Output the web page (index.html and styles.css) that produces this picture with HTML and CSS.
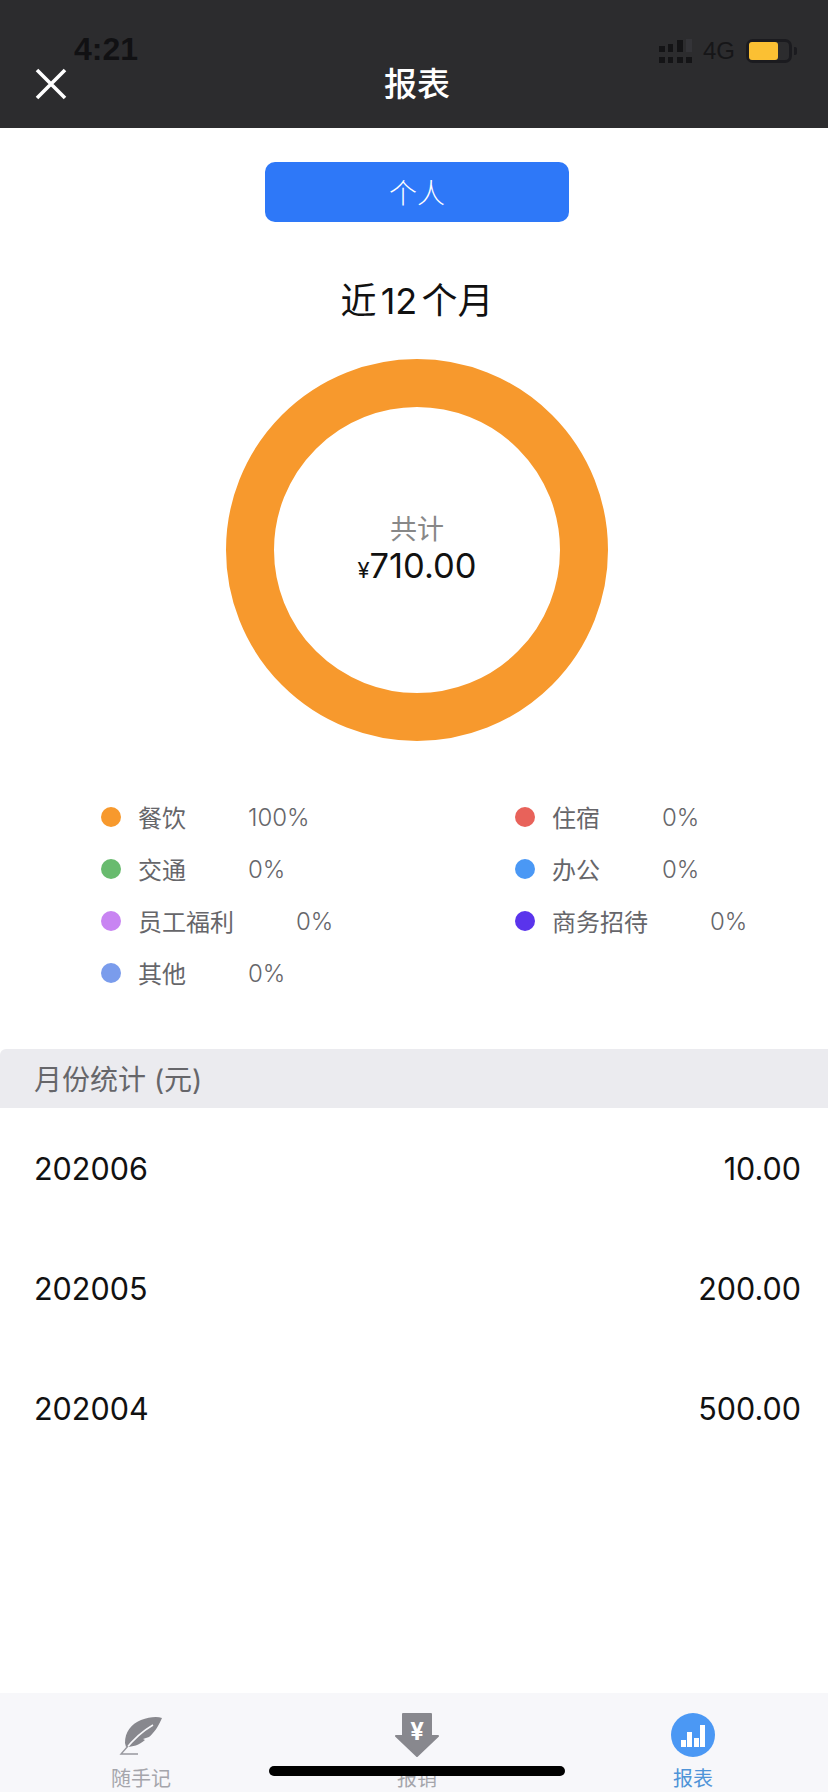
FILE: index.html
```html
<!DOCTYPE html>
<html lang="zh-CN">
<head>
    <meta charset="UTF-8">
    <meta name="viewport" content="width=device-width, initial-scale=1.0">
    <title>报表</title>
    <link rel="stylesheet" href="styles.css">
</head>
<body>
    <div class="app">
        <header class="topbar">
            <button class="close" aria-label="关闭">
                <svg width="32" height="32" viewBox="0 0 32 32"><path d="M2 2L30 30M30 2L2 30" stroke="#fff" stroke-width="3.6" fill="none"/></svg>
            </button>
            <h1>报表</h1>
        </header>

        <!-- phone status bar sits on top of the dark header -->
        <div class="statusbar">
            <span class="clock">4:21</span>
            <div class="status-right">
                <svg width="34" height="24" viewBox="0 0 34 24" fill="#141416">
                    <rect x="1" y="7" width="6" height="6"/>
                    <rect x="10" y="5" width="5" height="8"/>
                    <rect x="19" y="1" width="6" height="12"/>
                    <rect x="28" y="0" width="6" height="13" fill="#343438"/>
                    <rect x="1" y="18" width="6" height="6"/>
                    <rect x="10" y="18" width="5" height="6"/>
                    <rect x="19" y="18" width="6" height="6"/>
                    <rect x="28" y="18" width="6" height="6"/>
                </svg>
                <span class="network">4G</span>
                <div class="battery"><div class="battery-fill"></div></div>
            </div>
        </div>

        <main class="content">
            <div class="summary">
                <button class="scope-btn">个人</button>
                <h2 class="period">近 12 个月</h2>

                <div class="donut">
                    <span class="donut-label">共计</span>
                    <span class="donut-total"><small>¥</small>710.00</span>
                </div>
            </div>

            <ul class="legend">
                <li><i class="dot c-food"></i><span>餐饮</span><em>100%</em></li>
                <li><i class="dot c-hotel"></i><span>住宿</span><em>0%</em></li>
                <li><i class="dot c-traffic"></i><span>交通</span><em>0%</em></li>
                <li><i class="dot c-office"></i><span>办公</span><em>0%</em></li>
                <li><i class="dot c-staff"></i><span>员工福利</span><em>0%</em></li>
                <li><i class="dot c-biz"></i><span>商务招待</span><em>0%</em></li>
                <li><i class="dot c-other"></i><span>其他</span><em>0%</em></li>
            </ul>

            <div class="section-head">月份统计 (元)</div>

            <div class="month-row"><span>202006</span><span>10.00</span></div>
            <div class="month-row"><span>202005</span><span>200.00</span></div>
            <div class="month-row"><span>202004</span><span>500.00</span></div>
        </main>

        <nav class="tabbar">
            <a class="tab">
                <svg width="44" height="44" viewBox="0 0 44 44">
                    <path d="M43 5C38 3 30 4 22 7C12 11 6 19 6 30L7 34C14 34 20 32 26 27L24 26L30 24C35 20 39 14 43 5Z" fill="#88888e"/>
                    <path d="M6 37C13 28 22 19 34 12" stroke="#f7f7fa" stroke-width="1.6" fill="none"/>
                    <path d="M9 33L2 41H19" stroke="#98989e" stroke-width="1.4" fill="none"/>
                </svg>
                <span>随手记</span>
            </a>
            <a class="tab">
                <svg width="44" height="44" viewBox="0 0 44 44">
                    <path d="M8 1H36V23H43L22 43L1 23H8Z" fill="#88888e" stroke="#88888e" stroke-width="2" stroke-linejoin="round"/>
                    <text x="22" y="27" class="yen">¥</text>
                </svg>
                <span>报销</span>
            </a>
            <a class="tab active">
                <svg width="44" height="44" viewBox="0 0 44 44">
                    <circle cx="22" cy="22" r="22" fill="#4b98f4"/>
                    <rect x="10" y="27" width="5" height="7" fill="#fff"/>
                    <rect x="16" y="19" width="5" height="15" fill="#fff"/>
                    <rect x="23" y="25" width="5" height="9" fill="#fff"/>
                    <rect x="29" y="12" width="5" height="22" fill="#fff"/>
                </svg>
                <span>报表</span>
            </a>
        </nav>

        <div class="home-bar"></div>
    </div>
</body>
</html>
```

FILE: styles.css
```css
* {
    margin: 0;
    padding: 0;
    box-sizing: border-box;
}

body {
    font-family: Inter, "Noto Sans CJK SC", sans-serif;
    background: #fff;
}

.app {
    position: relative;
    width: 828px;
    height: 1792px;
    display: flex;
    flex-direction: column;
    overflow: hidden;
}

/* header */
.topbar {
    height: 128px;
    padding: 40px 0 0 6px;
    background: #2c2c2e;
    display: flex;
    align-items: center;
    justify-content: center;
    position: relative;
}

.topbar h1 {
    color: #fff;
    font-size: 33px;
    font-weight: 500;
    line-height: 86px;
}

.close {
    position: absolute;
    left: 35px;
    top: 68px;
    width: 32px;
    height: 32px;
    background: none;
    border: none;
}

.close svg {
    display: block;
}

.statusbar {
    position: absolute;
    left: 0;
    top: 0;
    width: 100%;
    padding: 32px 36px 0 74px;
    height: 66px;
    display: flex;
    justify-content: space-between;
    align-items: center;
    color: #111113;
}

.clock {
    font-family: "Liberation Sans", sans-serif;
    font-size: 32px;
    font-weight: 700;
}

.status-right {
    display: flex;
    align-items: center;
    margin-top: 4px;
}

.network {
    font-family: "Liberation Sans", sans-serif;
    font-size: 24px;
    margin: 0 11px;
    color: #161618;
}

.battery {
    width: 46px;
    height: 24px;
    border: 3px solid #1b1b1f;
    border-radius: 7px;
    position: relative;
}

.battery::after {
    content: "";
    position: absolute;
    right: -8px;
    top: 5px;
    width: 3px;
    height: 8px;
    background: #1b1b1f;
    border-radius: 0 2px 2px 0;
}

.battery-fill {
    width: 29px;
    height: 18px;
    background: #fbc033;
    border-radius: 3px;
}

/* content */
.content {
    flex: 1;
    display: flex;
    flex-direction: column;
}

.summary {
    padding-left: 6px;
    display: flex;
    flex-direction: column;
    align-items: center;
}

.scope-btn {
    margin-top: 34px;
    width: 304px;
    height: 60px;
    background: #2e78f8;
    border: none;
    border-radius: 10px;
    color: #fff;
    font-family: inherit;
    font-size: 28px;
    font-weight: 300;
}

.period {
    margin-top: 54px;
    font-size: 36px;
    font-weight: 400;
    line-height: 50px;
    color: #111;
    word-spacing: -6px;
}

.donut {
    margin-top: 33px;
    width: 382px;
    height: 382px;
    border: 48px solid #f7992d;
    border-radius: 50%;
    display: flex;
    flex-direction: column;
    align-items: center;
    justify-content: center;
}

.donut-label {
    font-size: 27px;
    line-height: 36px;
    color: #888;
}

.donut-total {
    font-size: 34.5px;
    line-height: 36px;
    color: #111;
}

.donut-total small {
    font-size: 22px;
}

.legend {
    list-style: none;
    width: 100%;
    margin-top: 50px;
    padding-left: 101px;
    display: grid;
    grid-template-columns: 414px 1fr;
    grid-auto-rows: 52px;
}

.legend li {
    display: flex;
    align-items: center;
    font-size: 24px;
    color: #66666a;
}

.legend span {
    margin-bottom: 2px;
}

.legend em {
    font-style: normal;
    margin-left: 62px;
    font-weight: 300;
}

.dot {
    width: 20px;
    height: 20px;
    border-radius: 50%;
    margin-right: 17px;
}

.c-food { background: #f7992d; }
.c-hotel { background: #e8625a; }
.c-traffic { background: #68bb6e; }
.c-office { background: #4a98f5; }
.c-staff { background: #c884f2; }
.c-biz { background: #5a34ec; }
.c-other { background: #7a9cec; }

.section-head {
    margin-top: 50px;
    width: 100%;
    height: 59px;
    padding-left: 34px;
    background: #ebebef;
    font-size: 28px;
    line-height: 62px;
    color: #66666a;
    border-radius: 6px 0 0 0;
}

.month-row {
    width: 100%;
    height: 120px;
    padding: 0 27px 0 34px;
    display: flex;
    justify-content: space-between;
    align-items: center;
    font-size: 30.5px;
    color: #111;
}

/* bottom tabs */
.tabbar {
    height: 99px;
    background: #f7f7fa;
    display: grid;
    grid-template-columns: repeat(3, 276px);
    padding-left: 3px;
}

.tab {
    display: flex;
    flex-direction: column;
    align-items: center;
    padding-top: 20px;
    font-size: 20px;
    line-height: 24px;
    color: #a5a5ab;
}

.tab svg {
    display: block;
    margin-bottom: 10px;
}

.tab.active {
    color: #4f94d8;
}

.yen {
    fill: #fff;
    font-size: 24px;
    font-weight: 700;
    text-anchor: middle;
}

.home-bar {
    position: absolute;
    left: 269px;
    top: 1766px;
    width: 296px;
    height: 10px;
    background: #000;
    border-radius: 5px;
}
```
